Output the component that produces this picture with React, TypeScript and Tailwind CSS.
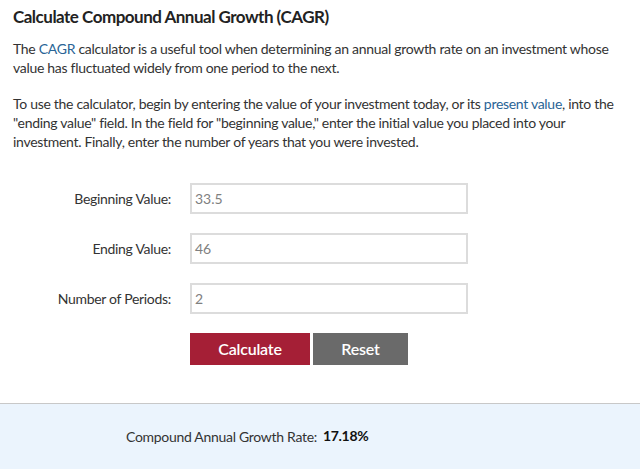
export default function App() {
  const font = { fontFamily: "Lato, 'Liberation Sans', sans-serif" };
  return (
    <div className="w-[640px] h-[469px] bg-white flex flex-col text-[#333333]" style={font}>
      <div className="px-[13px] pt-[6px]">
        <h1 className="text-[17px] font-bold leading-[22px] text-[#222222] tracking-[-0.5px]">
          Calculate Compound Annual Growth (CAGR)
        </h1>
        <p className="mt-[11px] text-[14px] leading-[19px] tracking-[-0.3px]">
          The <span className="text-[#2a6496]">CAGR</span> calculator is a useful tool when determining an annual growth rate on an investment whose value has fluctuated widely from one period to the next.
        </p>
        <p className="mt-[17px] text-[14px] leading-[19px] tracking-[-0.3px]">
          To use the calculator, begin by entering the value of your investment today, or its <span className="text-[#2a6496]">present value</span>, into the "ending value" field. In the field for "beginning value," enter the initial value you placed into your investment. Finally, enter the number of years that you were invested.
        </p>
      </div>
      <div className="mt-[32px] flex flex-col gap-[19px]">
        {[
          ["Beginning Value:", "33.5"],
          ["Ending Value:", "46"],
          ["Number of Periods:", "2"],
        ].map(([label, value]) => (
          <div key={label} className="flex items-center h-[31px]">
            <div className="w-[171px] text-right text-[14px] tracking-[-0.3px] text-[#333333]">{label}</div>
            <div className="ml-[19px] w-[278px] h-[31px] border-2 border-[#dcdcdc] flex items-center px-[3px] text-[14px] text-[#808080]">
              {value}
            </div>
          </div>
        ))}
        <div className="flex ml-[190px] gap-[3px]">
          <button className="w-[120px] h-[32px] bg-[#a51f36] text-white text-[16px] font-semibold tracking-[-0.2px]">Calculate</button>
          <button className="w-[95px] h-[32px] bg-[#6a6a6a] text-white text-[16px] font-semibold tracking-[-0.2px]">Reset</button>
        </div>
      </div>
      <div className="mt-[38px] flex-1 border-t border-[#c8c8c8] bg-[#ebf4fd] flex items-start pt-[20px] pl-[126px]">
        <span className="text-[14px] tracking-[-0.3px] text-[#333333] mt-[2px]">Compound Annual Growth Rate:</span>
        <span className="ml-[6px] text-[14px] font-bold text-[#111111] tracking-[-0.3px] mt-[1px]">17.18%</span>
      </div>
    </div>
  );
}
